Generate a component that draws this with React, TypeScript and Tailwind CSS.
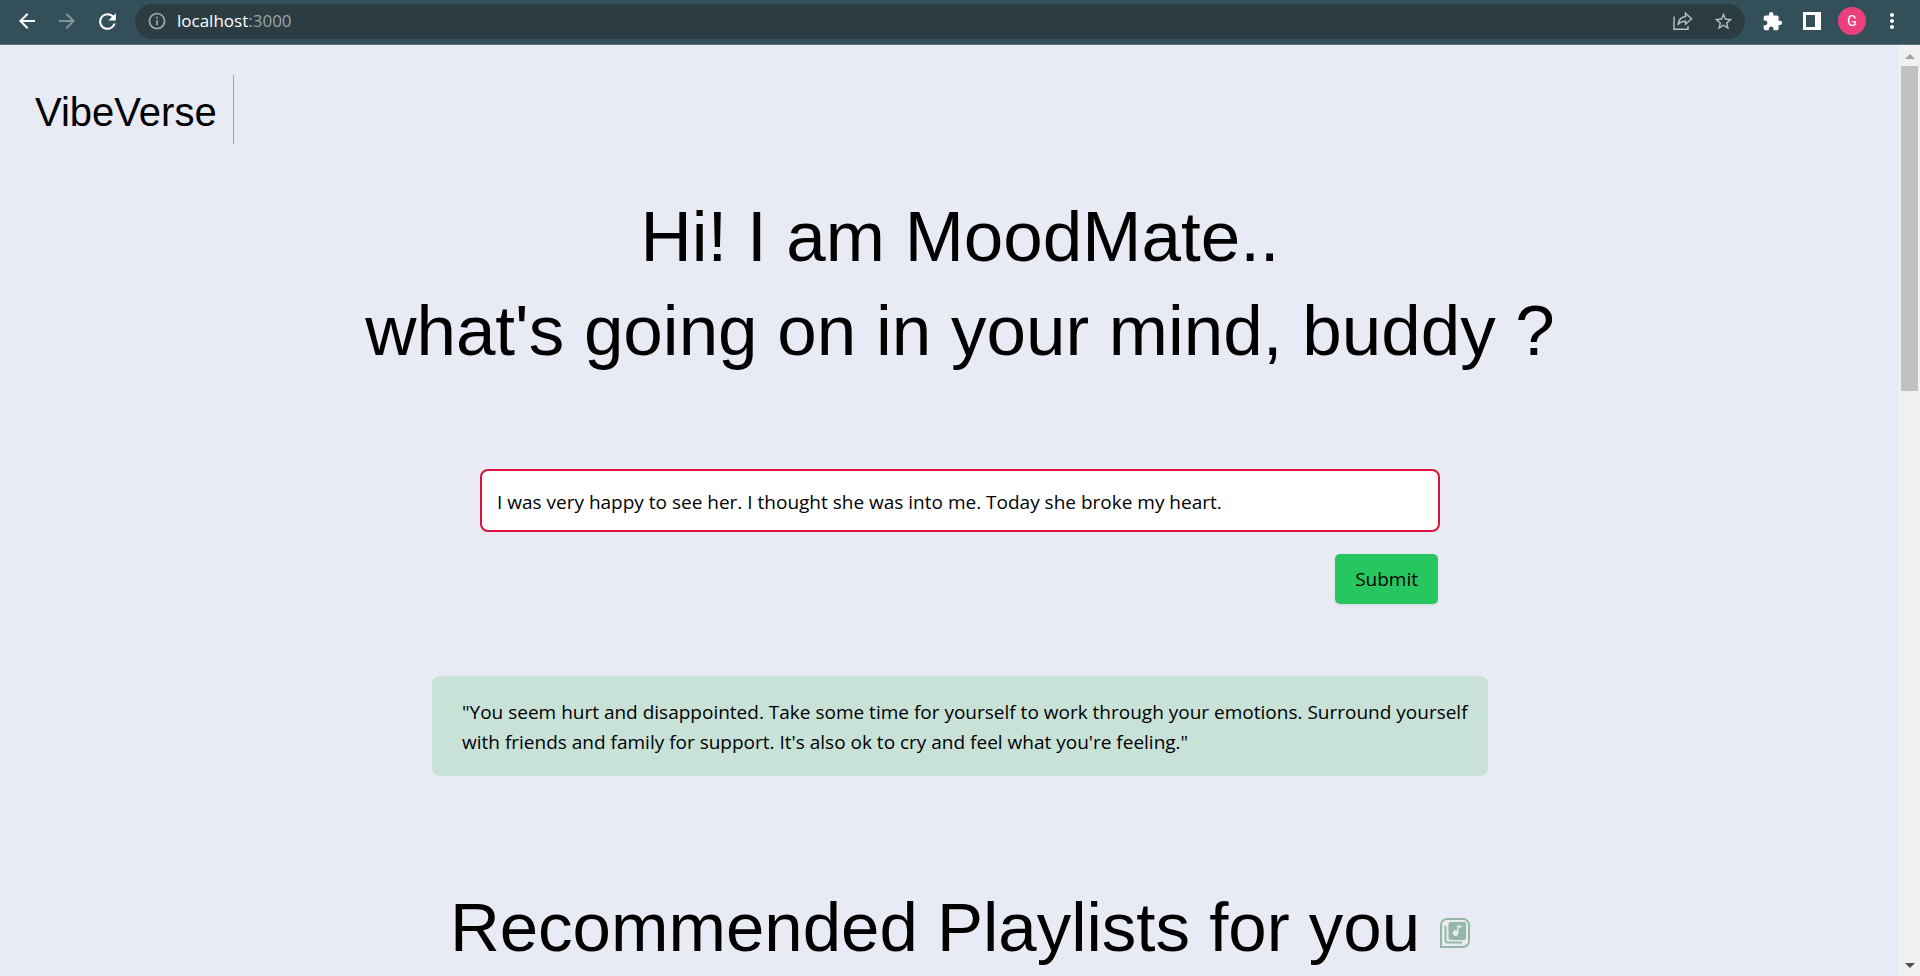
import type { ReactNode } from "react";
import { MdArrowBack, MdArrowForward, MdRefresh, MdInfoOutline, MdStarBorder, MdExtension, MdMoreVert } from "react-icons/md";

function ToolButton({ label, children, className = "" }: { label: string; children: ReactNode; className?: string }) {
  return (
    <button type="button" aria-label={label} className={`flex h-7 w-7 items-center justify-center ${className}`}>
      {children}
    </button>
  );
}

function ShareIcon() {
  return (
    <svg viewBox="0 0 20 20" className="h-5 w-5" fill="none" stroke="currentColor" strokeWidth="1.4">
      <path d="M1 5.5V18.3H15V15" />
      <path d="M12.5 2.2L18.6 7.8L12.5 13.2V10.2C9 10.1 6.7 11.2 5 13.8C5.4 9.3 7.9 6.2 12.5 5.5Z" strokeLinejoin="miter" />
    </svg>
  );
}

function PanelIcon() {
  return (
    <svg viewBox="0 0 18 18" className="h-[18px] w-[18px]">
      <path fillRule="evenodd" fill="currentColor" d="M0 0H18V18H0ZM3 3V15H12V3Z" />
    </svg>
  );
}

function PlaylistIcon() {
  return (
    <svg viewBox="0 0 30 30" className="h-[30px] w-[30px] text-[#95b8a6]">
      <path d="M1 29V7A6 6 0 0 1 7 1H23A6 6 0 0 1 29 7V23A6 6 0 0 1 23 29Z" fill="none" stroke="currentColor" strokeWidth="2" />
      <path d="M5.5 8V22.5A2 2 0 0 0 7.5 24.5H22" fill="none" stroke="currentColor" strokeWidth="2" />
      <rect x="8.5" y="4" width="17.5" height="18" rx="2" fill="currentColor" />
      <path d="M17 7.5H21.5V9.5H18.5V15A2.9 2.9 0 1 1 17 12.5Z" fill="#e8ebf3" />
    </svg>
  );
}

function BrowserBar() {
  return (
    <header className="flex h-[45px] items-center border-b border-[#5b747c] bg-[#334f5a] pb-0.5 pl-[13px] pr-3.5 text-white">
      <nav className="flex items-center gap-3" aria-label="Browser">
        <ToolButton label="Back"><MdArrowBack size={24} /></ToolButton>
        <ToolButton label="Forward" className="text-[#82949a]"><MdArrowForward size={24} /></ToolButton>
        <ToolButton label="Reload"><MdRefresh size={25} /></ToolButton>
      </nav>
      <div className="ml-3.5 flex h-[35px] flex-1 items-center rounded-full bg-[#2b3c43] pl-3 pr-2">
        <MdInfoOutline size={20} className="text-[#a3abae]" />
        <p className="ml-2.5 flex-1 font-['Open_Sans','Noto_Sans',sans-serif] text-[17px]">
          localhost<span className="text-[#9ba5a9]">:3000</span>
        </p>
        <div className="flex items-center gap-3 text-[#bcc1c3]">
          <ToolButton label="Share"><ShareIcon /></ToolButton>
          <ToolButton label="Bookmark"><MdStarBorder size={21} /></ToolButton>
        </div>
      </div>
      <div className="ml-[13px] flex items-center gap-3">
        <ToolButton label="Extensions"><MdExtension size={21} /></ToolButton>
        <ToolButton label="Side panel"><PanelIcon /></ToolButton>
        <button type="button" aria-label="Profile G" className="flex h-7 w-7 items-center justify-center rounded-full bg-[#ec407a] font-[Roboto,sans-serif] text-sm">
          G
        </button>
        <ToolButton label="Menu"><MdMoreVert size={24} /></ToolButton>
      </div>
    </header>
  );
}

function ScrollBar() {
  return (
    <div aria-hidden="true" className="absolute inset-y-0 right-0 flex w-[21px] flex-col items-center justify-between bg-[#f1f1f1]">
      <div className="flex w-[17px] flex-col items-center">
        <svg viewBox="0 0 10 5" className="mt-[9px] mb-[7px] h-[5px] w-[10px]"><path d="M0 5L5 0L10 5Z" fill="#a3a3a3" /></svg>
        <div className="h-[325px] w-full bg-[#c1c1c1]" />
      </div>
      <svg viewBox="0 0 10 5" className="mb-2 h-[5px] w-[10px] shrink-0"><path d="M0 0L5 5L10 0Z" fill="#505050" /></svg>
    </div>
  );
}

export default function App() {
  return (
    <div className="flex min-h-screen flex-col bg-[#e8ebf3] text-black">
      <BrowserBar />
      <div className="relative flex-1 font-['Liberation_Sans',Arial,sans-serif]">
        <div className="flex pt-[30px] pl-[35px]">
          <a href="/" className="flex h-[69px] items-center border-r border-[#9ca3af] pr-4 pt-1 text-[40px] leading-none">VibeVerse</a>
        </div>
        <main className="flex flex-col items-center">
          <h1 className="mt-[46px] text-center text-[71px] leading-[94px]">
            Hi! I am MoodMate..
            <br />
            what's going on in your mind, buddy ?
          </h1>
          <form
            className="mt-[91px] flex w-1/2 flex-col font-['Open_Sans','Noto_Sans',sans-serif] text-[19px]"
            onSubmit={(event) => event.preventDefault()}
          >
            <input
              type="text"
              aria-label="What's on your mind"
              defaultValue="I was very happy to see her. I thought she was into me. Today she broke my heart."
              className="h-[63px] w-full rounded-lg border-2 border-[#dc143c] bg-white px-[15px] pt-0.5 outline-none"
            />
            <button type="submit" className="mt-[22px] mr-0.5 h-[50px] self-end rounded-[5px] bg-[#26c660] px-5 shadow-[0_1px_3px_rgba(0,0,0,0.08)]">
              Submit
            </button>
          </form>
          <p className="mt-[72px] w-[55%] rounded-lg bg-[#c8e2d8] pt-[21px] pb-[19px] pl-[30px] pr-4 font-['Open_Sans','Noto_Sans',sans-serif] text-[19px] leading-[30px]">
            "You seem hurt and disappointed. Take some time for yourself to work through your emotions. Surround yourself
            with friends and family for support. It's also ok to cry and feel what you're feeling."
          </p>
          <h2 className="mt-[105px] flex items-center gap-5 text-[69px] leading-[94px]">
            Recommended Playlists for you
            <span className="pt-2.5"><PlaylistIcon /></span>
          </h2>
        </main>
        <ScrollBar />
      </div>
    </div>
  );
}
